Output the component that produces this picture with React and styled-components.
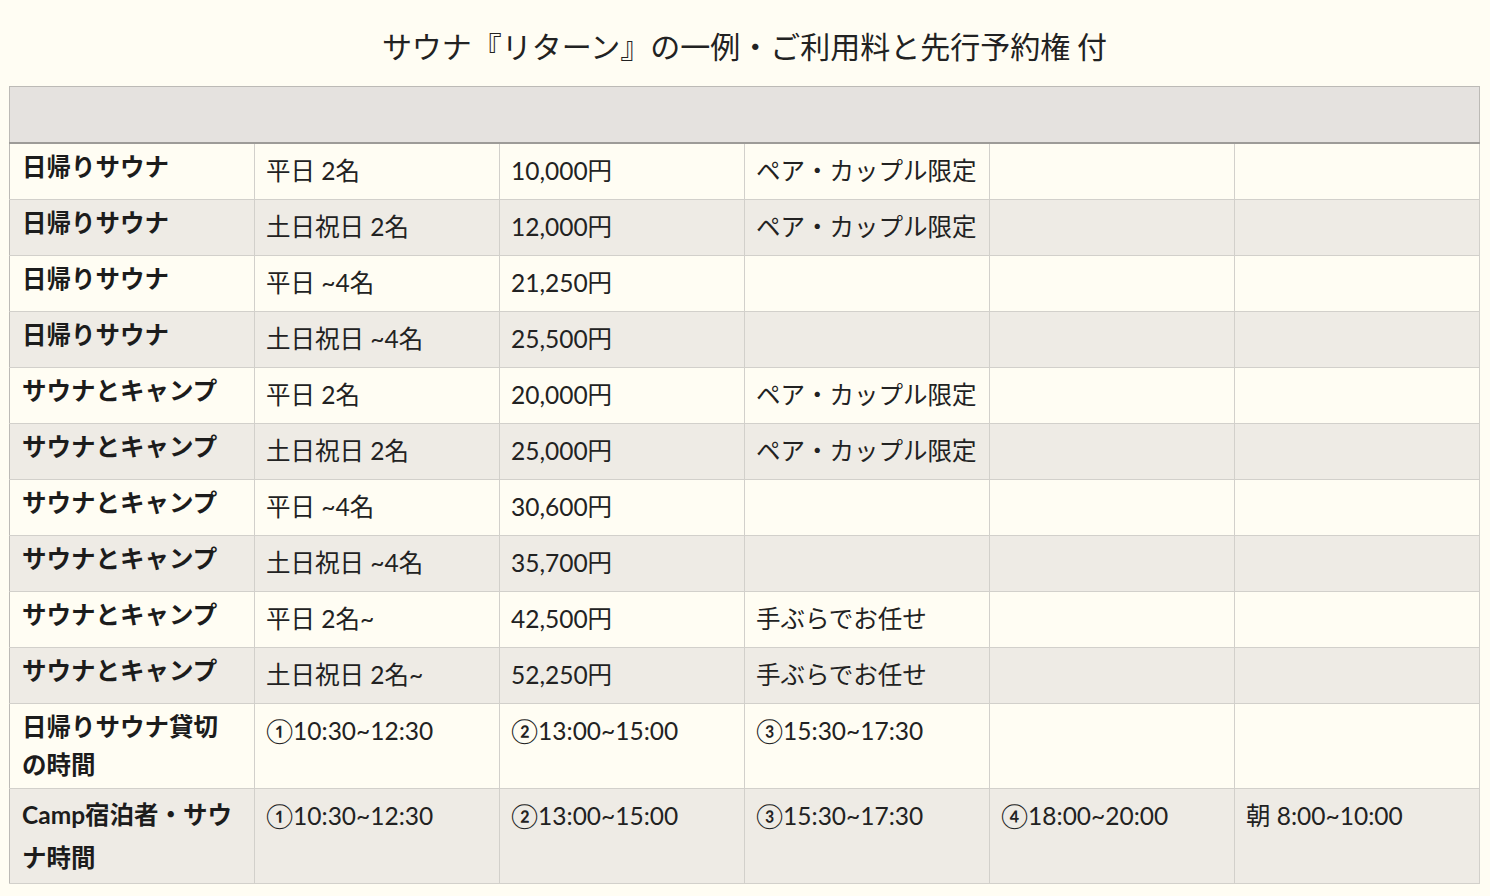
import React from "react";
import styled, { createGlobalStyle } from "styled-components";

const GlobalStyle = createGlobalStyle`
  body {
    margin: 0;
    background: #fffdf3;
    font-family: Lato, "Noto Sans CJK JP", sans-serif;
    color: #222;
  }
`;

const rows = [
  { plan: "日帰りサウナ", cells: ["平日 2名", "10,000円", "ペア・カップル限定", "", ""] },
  { plan: "日帰りサウナ", cells: ["土日祝日 2名", "12,000円", "ペア・カップル限定", "", ""] },
  { plan: "日帰りサウナ", cells: ["平日 ~4名", "21,250円", "", "", ""] },
  { plan: "日帰りサウナ", cells: ["土日祝日 ~4名", "25,500円", "", "", ""] },
  { plan: "サウナとキャンプ", cells: ["平日 2名", "20,000円", "ペア・カップル限定", "", ""] },
  { plan: "サウナとキャンプ", cells: ["土日祝日 2名", "25,000円", "ペア・カップル限定", "", ""] },
  { plan: "サウナとキャンプ", cells: ["平日 ~4名", "30,600円", "", "", ""] },
  { plan: "サウナとキャンプ", cells: ["土日祝日 ~4名", "35,700円", "", "", ""] },
  { plan: "サウナとキャンプ", cells: ["平日 2名~", "42,500円", "手ぶらでお任せ", "", ""] },
  { plan: "サウナとキャンプ", cells: ["土日祝日 2名~", "52,250円", "手ぶらでお任せ", "", ""] },
  {
    plan: "日帰りサウナ貸切の時間",
    cells: ["①10:30~12:30", "②13:00~15:00", "③15:30~17:30", "", ""],
  },
  {
    plan: "Camp宿泊者・サウナ時間",
    loose: true,
    cells: ["①10:30~12:30", "②13:00~15:00", "③15:30~17:30", "④18:00~20:00", "朝 8:00~10:00"],
  },
];

export default function App() {
  return (
    <Page>
      <GlobalStyle />
      <Title>サウナ『リターン』の一例・ご利用料と先行予約権 付</Title>
      <Table>
        <colgroup>
          {[0, 1, 2, 3, 4, 5].map((i) => (
            <col key={i} />
          ))}
        </colgroup>
        <thead>
          <tr>
            <HeadCell colSpan={6} />
          </tr>
        </thead>
        <tbody>
          {rows.map((row, i) => (
            <Row key={i} $shaded={i % 2 === 1}>
              <PlanCell $loose={row.loose}>{row.plan}</PlanCell>
              {row.cells.map((c, j) => (
                <Cell key={j}>{c}</Cell>
              ))}
            </Row>
          ))}
        </tbody>
      </Table>
    </Page>
  );
}

const Page = styled.div`
  padding: 0 10px 13px 9px;
`;

const Title = styled.h1`
  margin: 0;
  padding: 25px 0 21px;
  font-family: "Noto Sans CJK JP", sans-serif;
  font-size: 30px;
  line-height: 40px;
  font-weight: 400;
  text-align: center;
  color: #222;
`;

const Table = styled.table`
  width: 100%;
  table-layout: fixed;
  border-collapse: collapse;
  border: 1px solid #bcbab6;
  font-size: 24.5px;
`;

const HeadCell = styled.th`
  height: 55px;
  padding: 0;
  background: #e5e2df;
  border-bottom: 2px solid #9d9b98;
`;

const Row = styled.tr`
  background: ${(p) => (p.$shaded ? "#eeebe5" : "#fffdf3")};
`;

const PlanCell = styled.th`
  text-align: left;
  vertical-align: top;
  font-weight: 700;
  padding: 4px 12px 4px;
  line-height: ${(p) => (p.$loose ? "43px" : "38px")};
  border: 1px solid #d2d0cb;
  border-left: 1px solid #bcbab6;
  color: #1c1c1c;
`;

const Cell = styled.td`
  vertical-align: top;
  padding: 8px 11px 9px;
  line-height: 38px;
  border: 1px solid #d2d0cb;
  color: #222;
`;
